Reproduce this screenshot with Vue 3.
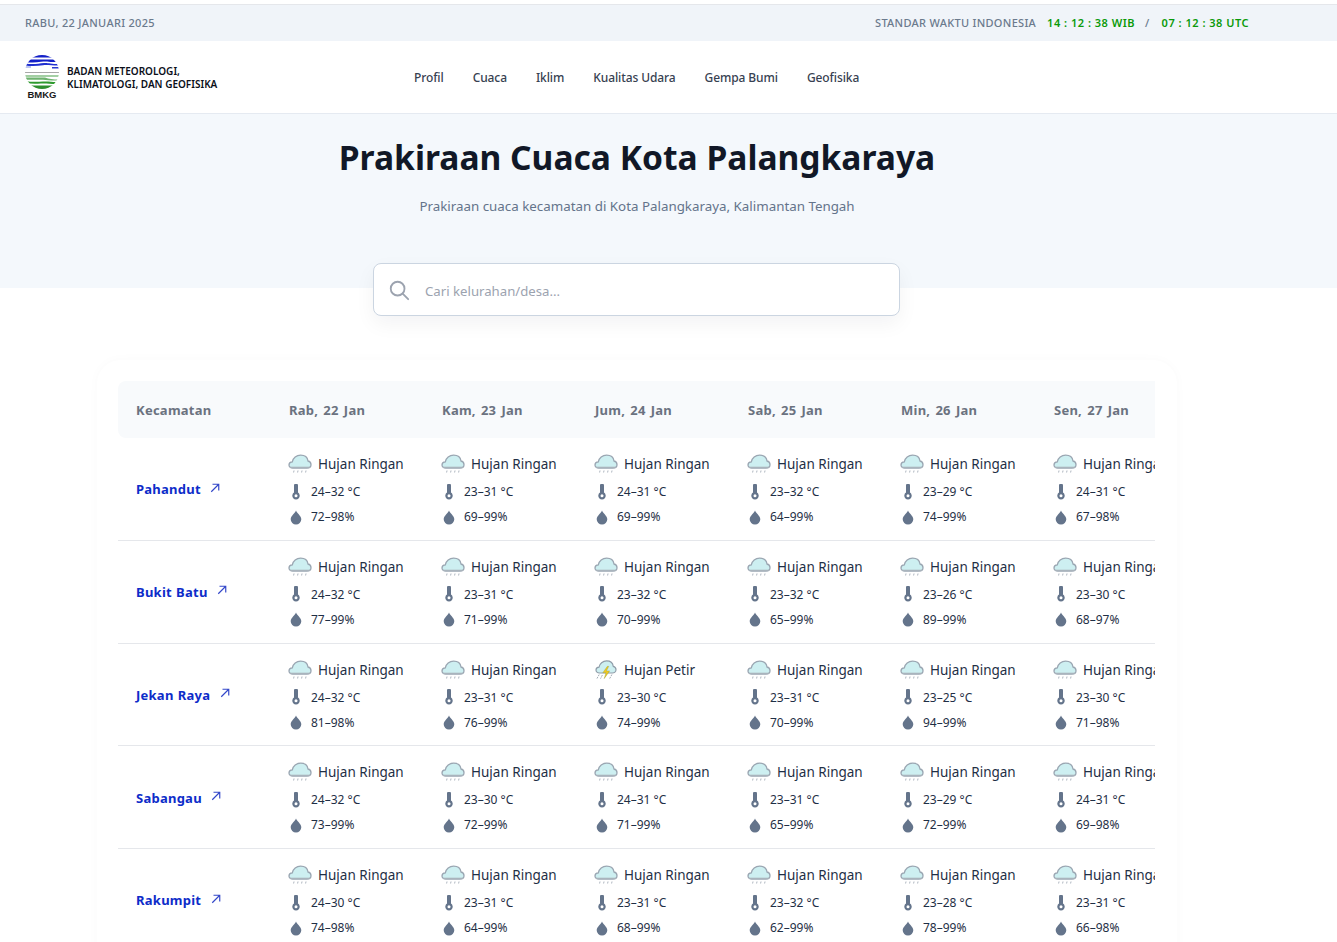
<template>
  <div class="page">
    <div class="topbar">
      <span>RABU, 22 JANUARI 2025</span>
      <div class="clock">
        <span class="std">STANDAR WAKTU INDONESIA</span>
        <b>14 : 12 : 38 WIB</b>
        <span class="sep">/</span>
        <b>07 : 12 : 38 UTC</b>
      </div>
    </div>
    <header class="nav">
      <div class="brand">
        <svg class="logo" viewBox="0 0 34 44" width="34" height="44">
          <defs><clipPath id="lc"><circle cx="17" cy="17" r="17" /></clipPath></defs>
          <g clip-path="url(#lc)">
            <rect x="0" y="0" width="34" height="2.500" fill="#1420c8" />
            <path d="M0 4.500H34V7H28C23 7 22 5.800 16 6.800C11 7.600 7 8 0 7Z" fill="#1420c8" />
            <path d="M0 8.500C8 9.500 13 8.800 19 8C23 7.600 25 9 34 9V10.500C26 10.500 22 9.500 18 10.200C13 11 7 11.500 0 10.500Z" fill="#2030d0" />
            <rect x="0" y="11.500" width="6" height="1" fill="#7f8fe0" />
            <rect x="27" y="12" width="7" height="1.500" fill="#2a3ad0" />
            <rect x="0" y="17" width="34" height="1" fill="#a8a8a8" />
            <rect x="0" y="20" width="34" height="2" fill="#a3cfa3" />
            <path d="M0 22.500H20C24 24 28 24.500 34 24.500V25.500C26 26 22 24.800 18 24.800H0Z" fill="#6fb26f" />
            <path d="M0 26C6 27 12 27 18 26.500C24 26 28 27.500 34 27V29C26 29.500 22 28 16 28.500C10 29 5 28.800 0 28Z" fill="#2e9a2e" />
            <rect x="0" y="30.500" width="34" height="3.500" fill="#2e8f2e" />
          </g>
          <text x="17" y="43" text-anchor="middle" class="bmkg">BMKG</text>
        </svg>
        <div class="brandname">BADAN METEOROLOGI,<br />KLIMATOLOGI, DAN GEOFISIKA</div>
      </div>
      <nav class="menu">
        <a v-for="m in menu" :key="m">{{ m }}</a>
      </nav>
    </header>
    <section class="hero">
      <h1>Prakiraan Cuaca Kota Palangkaraya</h1>
      <p>Prakiraan cuaca kecamatan di Kota Palangkaraya, Kalimantan Tengah</p>
    </section>
    <div class="search">
      <svg width="22" height="22" viewBox="0 0 24 24" fill="none" stroke="#9ca3af" stroke-width="2" stroke-linecap="round">
        <circle cx="10.500" cy="10.500" r="7.500" /><path d="M16 16l6 6" />
      </svg>
      <span>Cari kelurahan/desa...</span>
    </div>
    <section class="card">
      <div class="scroll">
        <div class="row head">
          <div class="cell name">Kecamatan</div>
          <div v-for="d in days" :key="d" class="cell">{{ d }}</div>
        </div>
        <div v-for="r in rows" :key="r.name" class="row body">
          <div class="cell name">
            <a class="link">{{ r.name }}
              <svg width="10" height="10" viewBox="0 0 12 12" fill="none" stroke="#3347c9" stroke-width="1.400"><path d="M1.500 10.500L10.500 1.500M3 1.500h7.500V9" /></svg>
            </a>
          </div>
          <div v-for="(c, i) in r.cells" :key="i" class="cell day">
            <div class="cond">
              <svg v-if="c[2]" class="wx" viewBox="0 0 24 22" width="24" height="20">
                <path d="M4.800 14.300C2.600 14.300 1 12.900 1 11C1 9.200 2.400 7.900 4.300 7.800C5 4 8.500 1 12.600 1C16.500 1 19.500 3.400 20 7C21.900 7.500 23 9 23 10.800C23 12.900 21.200 14.300 19 14.300Z" fill="#cdeff1" stroke="#8f9ca8" stroke-width="1.300" />
                <path d="M13.500 7L8.500 14h3.500l-2 6.500 6-8.500h-3.500l2.500-5z" fill="#f2c81e" stroke="#8d9a3a" stroke-width=".4" />
                <path d="M4.500 16l-2.500 4.500M8 16.500l-2 4M18.500 16l-2.500 4.500" stroke="#a3acb5" stroke-width="1.100" stroke-dasharray="2 1" />
              </svg>
              <svg v-else class="wx" viewBox="0 0 24 20" width="24" height="20">
                <path d="M4.800 14C2.600 14 1 12.700 1 10.900C1 9.200 2.400 8 4.300 7.900C5 4 8.500 1.200 12.600 1.200C16.500 1.200 19.500 3.500 20 7C21.900 7.500 23 8.900 23 10.700C23 12.700 21.200 14 19 14Z" fill="#cdeff1" stroke="#9aa6b2" stroke-width="1.300" />
                <path d="M2 13.300H22" stroke="#aab4bd" stroke-width="1.200" />
                <path d="M6 16.500l-.4 2M10 16.500l-.4 2M14 16.500l-.4 2M18 16.500l-.4 2" stroke="#aeb6bf" stroke-width="1" />
              </svg>
              <span>{{ c[2] ? 'Hujan Petir' : 'Hujan Ringan' }}</span>
            </div>
            <div class="meta">
              <svg viewBox="0 0 14 16" width="14" height="16"><path d="M5 1.500a2 2 0 0 1 4 0V8.600a3.700 3.700 0 1 1-4 0Z" fill="#64748b" /><circle cx="7" cy="11.700" r="1.500" fill="#fff" /></svg>
              <span>{{ c[0] }} °C</span>
            </div>
            <div class="meta">
              <svg viewBox="0 0 14 16" width="14" height="16"><path d="M7 1.500C7.800 4 12.300 6.800 12.300 10.300A5.300 5.300 0 0 1 1.700 10.300C1.700 6.800 6.200 4 7 1.500Z" fill="#64748b" /></svg>
              <span>{{ c[1] }}%</span>
            </div>
          </div>
        </div>
      </div>
    </section>
  </div>
</template>

<script setup>
const menu = ['Profil', 'Cuaca', 'Iklim', 'Kualitas Udara', 'Gempa Bumi', 'Geofisika']
const days = ['Rab, 22 Jan', 'Kam, 23 Jan', 'Jum, 24 Jan', 'Sab, 25 Jan', 'Min, 26 Jan', 'Sen, 27 Jan']
const rows = [
  { name: 'Pahandut', cells: [['24–32', '72–98'], ['23–31', '69–99'], ['24–31', '69–99'], ['23–32', '64–99'], ['23–29', '74–99'], ['24–31', '67–98']] },
  { name: 'Bukit Batu', cells: [['24–32', '77–99'], ['23–31', '71–99'], ['23–32', '70–99'], ['23–32', '65–99'], ['23–26', '89–99'], ['23–30', '68–97']] },
  { name: 'Jekan Raya', cells: [['24–32', '81–98'], ['23–31', '76–99'], ['23–30', '74–99', true], ['23–31', '70–99'], ['23–25', '94–99'], ['23–30', '71–98']] },
  { name: 'Sabangau', cells: [['24–32', '73–99'], ['23–30', '72–99'], ['24–31', '71–99'], ['23–31', '65–99'], ['23–29', '72–99'], ['24–31', '69–98']] },
  { name: 'Rakumpit', cells: [['24–30', '74–98'], ['23–31', '64–99'], ['23–31', '68–99'], ['23–32', '62–99'], ['23–28', '78–99'], ['23–31', '66–98']] }
]
</script>

<style>
html, body { margin: 0; background: #fff; overflow: hidden; }
</style>

<style scoped>
.page {
  height: 942px;
  overflow: hidden;
  padding-top: 4px;
  box-sizing: border-box;
  font-family: "Noto Sans", sans-serif;
  color: #1f2937;
}
.topbar {
  height: 37px;
  border-top: 1px solid #e5e7eb;
  background: #f0f4f9;
  padding: 0 88px 2px 25px;
  box-sizing: border-box;
  display: flex;
  align-items: center;
  justify-content: space-between;
  font-size: 11px;
  font-weight: 500;
  color: #6b7a8d;
  letter-spacing: .3px;
}
.clock { display: flex; align-items: center; gap: 12px; }
.clock b { color: #0a9a0a; font-weight: 600; letter-spacing: .5px; }
.std { margin-right: -1px; }
.sep { margin-left: -2px; }
.nav {
  height: 73px;
  box-sizing: border-box;
  background: #fff;
  border-bottom: 1px solid #e5eaf1;
  display: flex;
  align-items: center;
  padding: 0 25px;
}
.brand { display: flex; align-items: center; gap: 8px; width: 389px; }
.logo { flex: none; }
.bmkg { font: 700 9.500px "Liberation Sans", sans-serif; fill: #1a1a1a; }
.brandname { font-size: 10px; line-height: 13px; font-weight: 600; color: #0b0f19; margin-top: 2px; }
.menu { display: flex; gap: 29px; font-size: 12px; font-weight: 500; color: #374151; letter-spacing: -.1px; }
.hero {
  height: 174px;
  background: #f4f8fc;
  text-align: center;
  box-sizing: border-box;
  padding: 20px 63px 0 0;
}
h1 { margin: 0; font-size: 33.6px; line-height: 47px; font-weight: 700; color: #111827; }
p { margin: 14px 0 0; font-size: 13.350px; line-height: 22px; color: #64748b; }
.search {
  width: 527px;
  height: 53px;
  box-sizing: border-box;
  margin: -25px 0 0 373px;
  background: #fff;
  border: 1px solid #cbd5e1;
  border-radius: 8px;
  box-shadow: 0 8px 20px rgba(15, 23, 42, .05);
  display: flex;
  align-items: center;
  padding-left: 14px;
  gap: 15px;
  font-size: 13.200px;
  color: #9ca3af;
}
.search span { margin-top: 2px; }
.card {
  width: 1080px;
  box-sizing: border-box;
  margin: 44px 0 0 97px;
  padding: 21px;
  background: #fff;
  border-radius: 24px;
  box-shadow: 0 0 12px rgba(15, 23, 42, .025);
}
.scroll { width: 1037px; overflow: hidden; }
.row { display: flex; width: 1071px; }
.cell { flex: 0 0 153px; box-sizing: border-box; padding-left: 18px; white-space: nowrap; }
.head {
  width: 1037px;
  height: 57px;
  align-items: center;
  background: #f8fafc;
  border-radius: 8px 0 0 8px;
  font-size: 13px;
  font-weight: 700;
  color: #6b7280;
  overflow: hidden;
  letter-spacing: .25px;
  word-spacing: 1.500px;
}
.body { height: 102.800px; box-sizing: border-box; border-bottom: 1px solid #e5e7eb; width: 1037px; overflow: hidden; }
.name { display: flex; align-items: center; }
.link { font-size: 13px; font-weight: 700; color: #0d2cc9; display: inline-flex; align-items: center; gap: 9.500px; margin-top: .5px; letter-spacing: .25px; word-spacing: .5px; }
.link svg { margin-top: -3px; }
.day { padding-top: 15px; }
.cond { display: flex; align-items: center; gap: 6px; height: 22px; font-size: 13.500px; color: #1f2f46; margin: 0 0 4px -1px; }
.wx { flex: none; }
.meta { display: flex; align-items: center; gap: 8px; height: 25px; font-size: 12px; color: #1f2f46; }
</style>
